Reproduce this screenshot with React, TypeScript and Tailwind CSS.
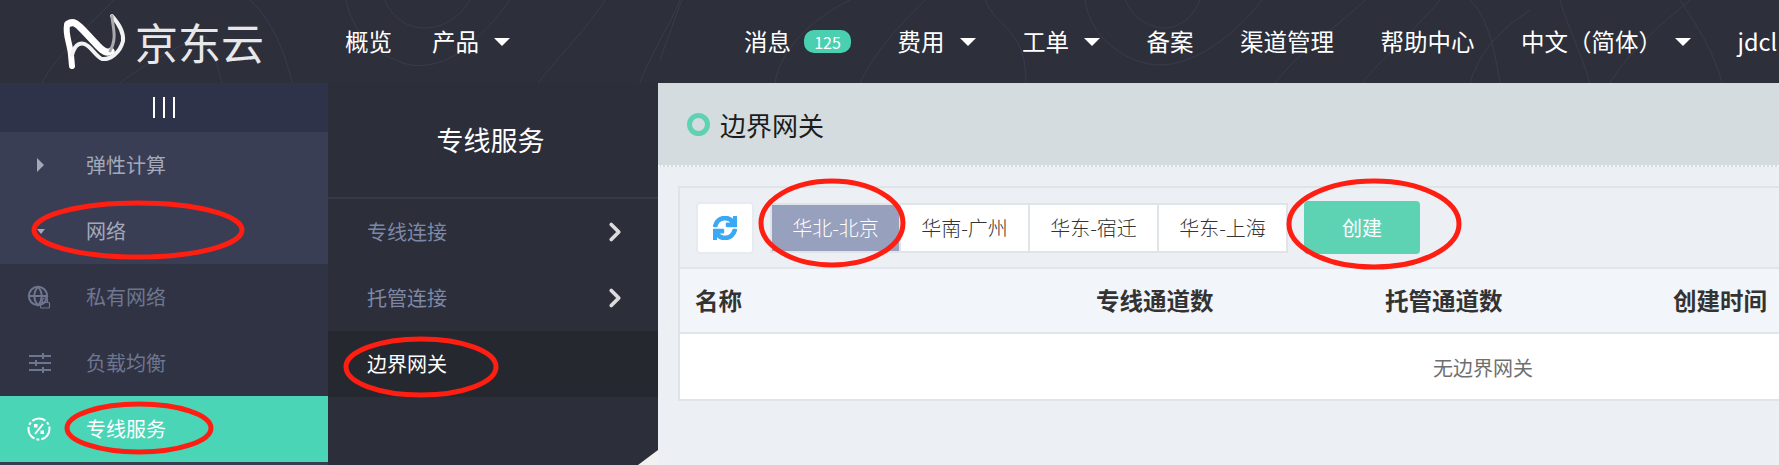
import { ChevronRight, Globe, Lock } from "lucide-react";
import { FaSync } from "react-icons/fa";

const navFont = { fontFamily: '"Noto Sans CJK SC", "Liberation Sans", sans-serif' };

function Caret() {
  return <span className="h-0 w-0 border-x-[8px] border-t-[8px] border-x-transparent border-t-white" />;
}

function NavItem({ label, caret, tight }: { label: string; caret?: boolean; tight?: boolean }) {
  return (
    <div className={`flex shrink-0 items-center whitespace-nowrap ${tight ? "gap-[13px]" : "gap-[15px]"}`}>
      <span>{label}</span>
      {caret && <Caret />}
    </div>
  );
}

function Contours() {
  return (
    <svg className="absolute inset-0 h-[83px] w-[1779px]" viewBox="0 0 1779 83" fill="none" stroke="#393c49" strokeWidth="1">
      <path d="M42 83C52 62 84 30 114 0" />
      <path d="M120 83C150 60 190 40 205 36C215 50 218 70 222 83" />
      <path d="M250 0C272 20 286 55 292 83" />
      <path d="M346 0C352 30 372 55 410 65C450 70 480 40 510 0" />
      <path d="M385 0C392 18 408 28 424 28C446 28 462 14 470 0" />
      <path d="M538 83C560 55 590 25 605 0" />
      <path d="M640 83C650 55 670 25 680 0" />
      <path d="M660 60C668 38 676 15 682 0" />
      <path d="M775 83C780 50 810 20 850 0" />
      <path d="M860 83C875 50 905 20 925 0" />
      <path d="M985 0C998 30 1026 28 1026 83" />
      <path d="M1085 0C1090 40 1130 65 1160 65C1195 65 1235 35 1262 0" />
      <path d="M1125 0C1135 20 1150 28 1165 28C1180 28 1195 15 1200 0" />
      <path d="M1275 83C1300 50 1340 25 1365 0" />
      <path d="M1362 83C1385 55 1420 25 1440 0" />
      <path d="M1470 0C1490 20 1495 55 1500 83" />
      <path d="M1560 0C1565 20 1580 50 1590 83" />
      <path d="M1470 83C1480 50 1500 30 1530 10" />
      <path d="M1610 83C1630 50 1660 25 1690 0" />
      <path d="M1680 0C1700 30 1715 55 1722 83" />
    </svg>
  );
}

function Logo() {
  return (
    <div className="flex w-[345px] shrink-0 items-center pl-[60px]">
      <svg width="67" height="58" viewBox="0 0 67 58" fill="none" strokeLinecap="round" className="shrink-0">
        <path d="M8 11C14 7 18 12 24 18L38 33C43 38 47 41 51 38" stroke="#fff" strokeWidth="7" />
        <path d="M7 12C5 22 10 30 11 42L12 53" stroke="#fff" strokeWidth="6" />
        <path d="M12 42C15 30 22 28 28 33C33 37 37 44 42 46C50 47 60 40 63 28C64 18 58 10 52 3" stroke="#f2f2f2" strokeWidth="4" />
        <path d="M52 3C52 12 58 24 50 38" stroke="#a9aab0" strokeWidth="3" />
      </svg>
      <span className="ml-[8px] whitespace-nowrap text-[43px] font-normal leading-none text-[#e8e8ea]">京东云</span>
    </div>
  );
}

function SideRow({ icon, label, className }: { icon: React.ReactNode; label: string; className: string }) {
  return (
    <div className={`flex h-[66px] items-center text-[20px] ${className}`}>
      <div className="flex w-[86px] shrink-0 items-center pl-[27px]">{icon}</div>
      <span>{label}</span>
    </div>
  );
}

function Sidebar() {
  return (
    <aside className="flex h-full w-[328px] shrink-0 flex-col bg-[#373c51]">
      <div className="flex h-[49px] items-center justify-center gap-[8px] bg-[#2e3349]">
        <span className="h-[21px] w-[2px] bg-white" />
        <span className="h-[21px] w-[2px] bg-white" />
        <span className="h-[21px] w-[2px] bg-white" />
      </div>
      <div className="bg-[#393e54]">
        <SideRow
          className="text-[#a4a9ba]"
          label="弹性计算"
          icon={<span className="ml-[10px] h-0 w-0 border-y-[7px] border-l-[7px] border-y-transparent border-l-[#a4a9ba]" />}
        />
        <SideRow
          className="text-[#a4a9ba]"
          label="网络"
          icon={<span className="ml-[10px] h-0 w-0 border-x-[4px] border-t-[5px] border-x-transparent border-t-[#a4a9ba]" />}
        />
      </div>
      <div className="bg-[#303343]">
        <SideRow
          className="text-[#6f7690]"
          label="私有网络"
          icon={
            <span className="relative block h-[24px] w-[24px]">
              <Globe size={22} strokeWidth={2.2} />
              <Lock size={12} strokeWidth={2.4} className="absolute bottom-0 right-0" />
            </span>
          }
        />
        <SideRow
          className="text-[#6f7690]"
          label="负载均衡"
          icon={
            <svg width="22" height="20" viewBox="0 0 22 20" fill="none" stroke="currentColor" strokeWidth="2" className="ml-[2px]">
              <path d="M0 3H22M0 10H22M0 17H22" />
              <path d="M14 0V6M7 7V13M14 14V20" />
            </svg>
          }
        />
      </div>
      <SideRow
        className="bg-[#4ad5b7] text-white"
        label="专线服务"
        icon={
          <svg width="24" height="24" viewBox="0 0 24 24" fill="none" stroke="#fff" strokeWidth="2">
            <circle cx="12" cy="12" r="10.5" strokeDasharray="14 2 3 2" />
            <path d="M16 7 8 17" />
            <rect x="7" y="7" width="3.5" height="3.5" fill="#fff" stroke="none" />
            <rect x="13.5" y="13.5" width="3.5" height="3.5" fill="#fff" stroke="none" />
          </svg>
        }
      />
    </aside>
  );
}

function SubMenu() {
  return (
    <section className="relative flex h-full w-[330px] shrink-0 flex-col bg-[#2c2e3a]">
      <div className="flex h-[116px] shrink-0 items-center justify-center border-b-2 border-[#363a48] pr-[5px] text-[27px] text-white">
        专线服务
      </div>
      <div className="flex h-[66px] items-center justify-between pl-[39px] pr-[28px] text-[20px] text-[#7d88a8]">
        专线连接
        <ChevronRight size={30} strokeWidth={3} className="text-[#dcdcdc]" />
      </div>
      <div className="flex h-[66px] items-center justify-between pl-[39px] pr-[28px] text-[20px] text-[#7d88a8]">
        托管连接
        <ChevronRight size={30} strokeWidth={3} className="text-[#dcdcdc]" />
      </div>
      <div className="flex h-[66px] items-center bg-[#262830] pl-[39px] text-[20px] text-white">边界网关</div>
      <span className="absolute bottom-0 right-0 h-0 w-0 border-b-[15px] border-l-[20px] border-b-[#f1f1f1] border-l-transparent" />
    </section>
  );
}

const tabs = ["华北-北京", "华南-广州", "华东-宿迁", "华东-上海"];

function Content() {
  return (
    <main className="h-full min-w-0 flex-1 overflow-hidden bg-[#ecf0f4]">
      <div className="flex h-[84px] items-center gap-[10px] border-b-2 border-dotted border-[#f4f6f8] bg-[#d4dcdf] pl-[29px] text-[26px] text-[#1d1d1d]">
        <span className="h-[23px] w-[23px] rounded-full border-[5px] border-[#5ed3b4] bg-[#d4dcdf]" />
        边界网关
      </div>
      <div className="ml-[20px] mt-[19px] w-[1200px] border-y-2 border-l-2 border-[#dfe4e8]">
        <div className="flex h-[79px] items-center pl-[16px]">
          <button className="flex h-[52px] w-[58px] items-center justify-center rounded-[4px] border-2 border-[#e6ebf0] bg-white">
            <FaSync size={24} stroke="currentColor" strokeWidth={30} className="text-[#3aa9f4]" />
          </button>
          <div className="ml-[16px] flex h-[50px] gap-[2px] border-2 border-[#dfe4e8] bg-[#dfe4e8]">
            {tabs.map((tab, i) => (
              <div
                key={tab}
                className={`flex w-[127px] items-center justify-center text-[20px] font-light ${i === 0 ? "bg-[#97a0bc] text-white" : "bg-white text-[#333]"}`}
              >
                {tab}
              </div>
            ))}
          </div>
          <button className="ml-[16px] flex h-[53px] w-[116px] items-center justify-center rounded-[4px] bg-[#5ed3b4] text-[20px] text-white">
            创建
          </button>
        </div>
        <div className="flex h-[67px] items-center border-y-2 border-[#e1e6ea] bg-[#f2f5fa] pl-[15px] text-[23.5px] font-bold text-[#333]">
          <span className="w-[401px]">名称</span>
          <span className="w-[289px]">专线通道数</span>
          <span className="w-[288px]">托管通道数</span>
          <span>创建时间</span>
        </div>
        <div className="flex h-[65px] items-center bg-white pl-[753px] pt-[2px] text-[20px] text-[#6f6f6f]">无边界网关</div>
      </div>
    </main>
  );
}

function Annotations() {
  return (
    <svg className="absolute left-0 top-0 h-[465px] w-[1779px]" viewBox="0 0 1779 465" fill="none" stroke="#ff1e12" strokeWidth="5">
      <ellipse cx="138" cy="230" rx="104" ry="27" />
      <ellipse cx="139" cy="428" rx="72" ry="24" />
      <ellipse cx="421" cy="367" rx="75" ry="28" />
      <ellipse cx="832" cy="223" rx="71" ry="42" />
      <ellipse cx="1374" cy="224" rx="85" ry="43" />
    </svg>
  );
}

export default function App() {
  return (
    <div className="relative flex h-[465px] w-[1779px] flex-col overflow-hidden bg-[#2c2e3a]" style={navFont}>
      <header className="relative flex h-[83px] shrink-0 items-center overflow-hidden bg-[#2d2f3b] text-[23.5px] text-white">
        <Contours />
        <div className="relative flex w-full items-center">
          <Logo />
          <div className="flex w-[399px] shrink-0 items-center gap-[40px]">
            <NavItem label="概览" />
            <NavItem label="产品" caret />
          </div>
          <div className="flex items-center gap-[46.5px]">
            <div className="flex shrink-0 items-center gap-[13px]">
              <span>消息</span>
              <span className="flex h-[23px] w-[47px] items-center justify-center rounded-[10px] bg-[#4ad0b0] text-[16px] leading-none">125</span>
            </div>
            <NavItem label="费用" caret />
            <NavItem label="工单" caret />
            <NavItem label="备案" />
            <NavItem label="渠道管理" />
            <NavItem label="帮助中心" />
            <NavItem label="中文（简体）" caret tight />
            <NavItem label="jdcl" />
          </div>
        </div>
      </header>
      <div className="flex min-h-0 flex-1">
        <Sidebar />
        <SubMenu />
        <Content />
      </div>
      <Annotations />
    </div>
  );
}
